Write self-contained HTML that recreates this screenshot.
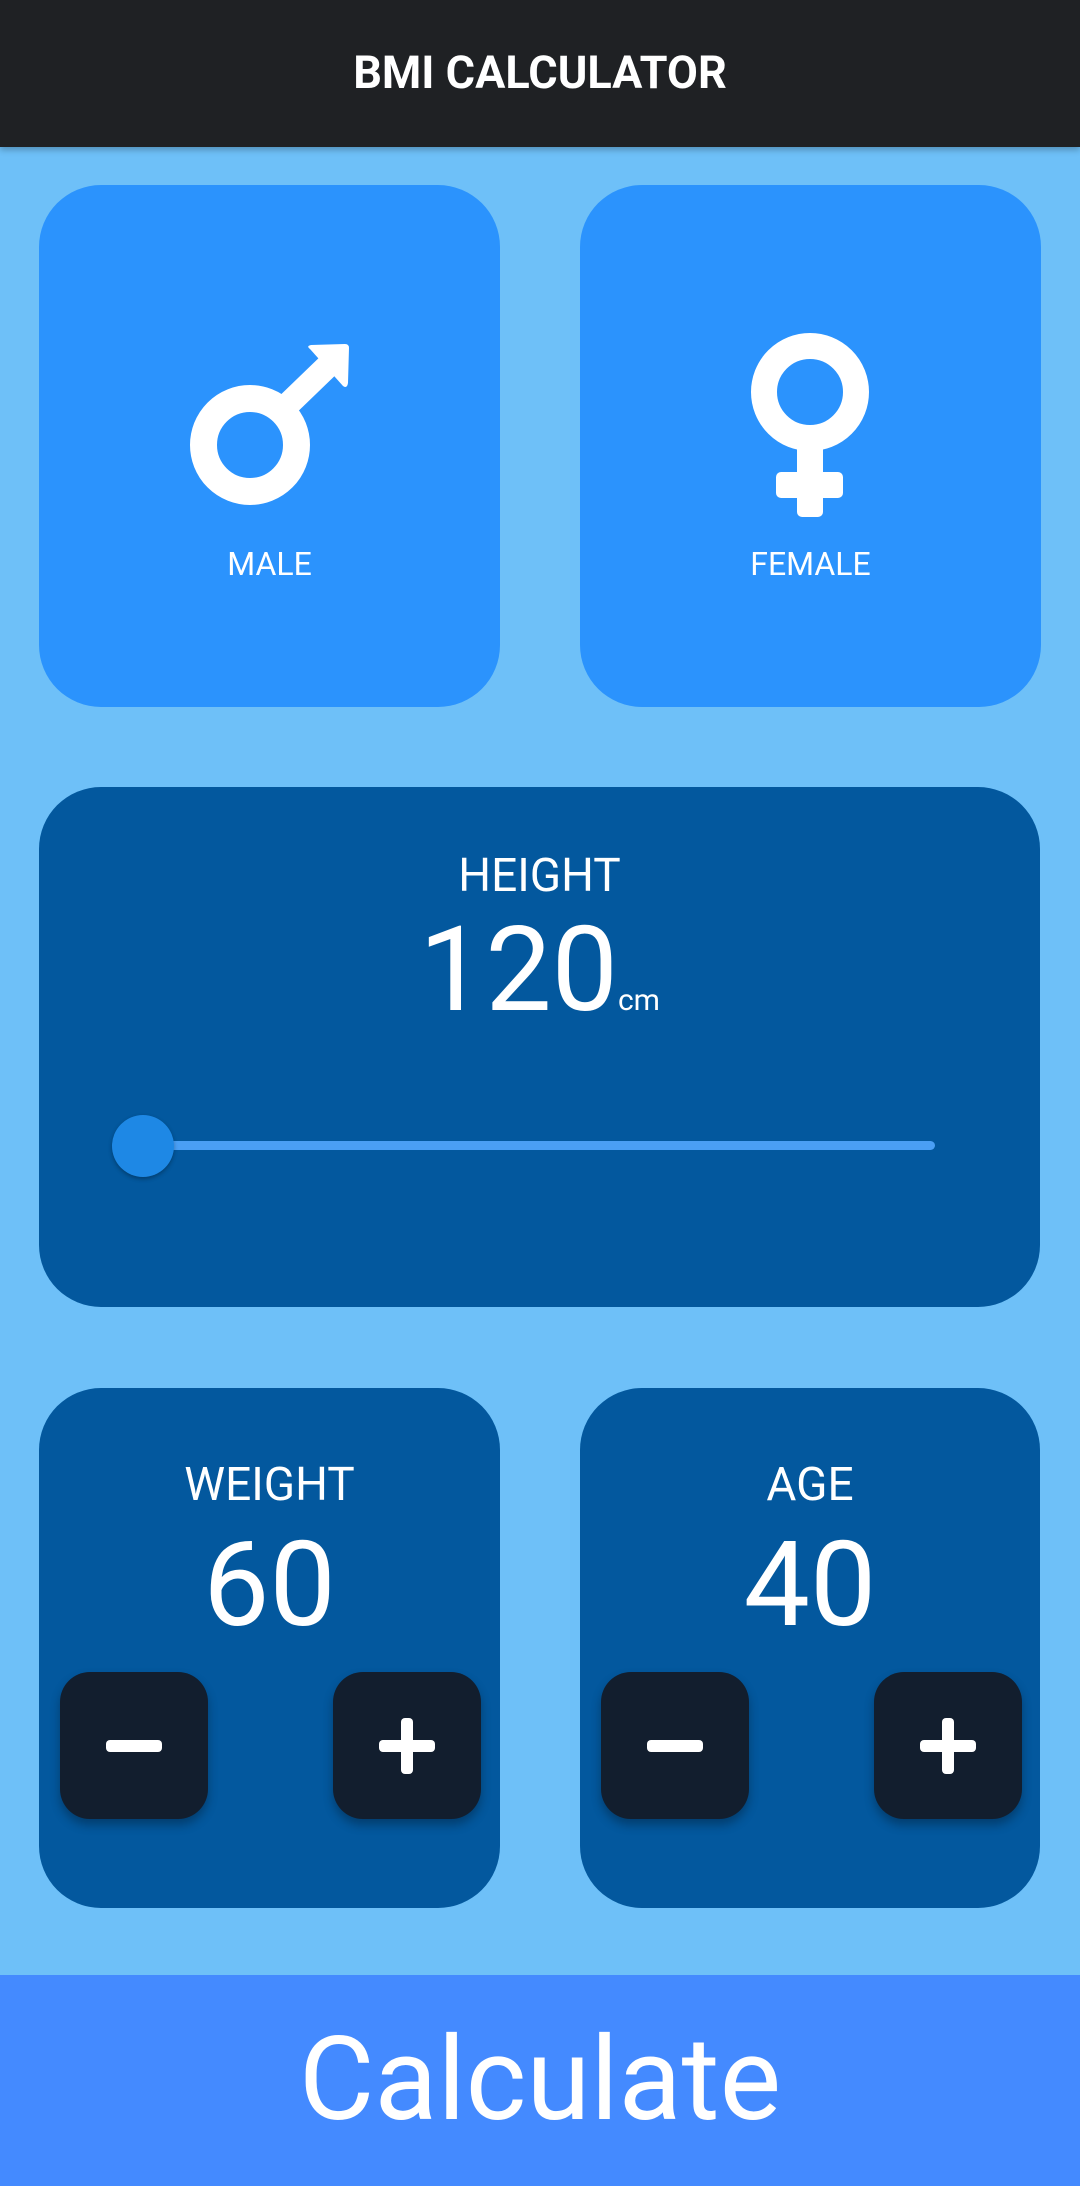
<!DOCTYPE html>
<html><head><meta charset="utf-8"><style>
*{margin:0;padding:0;box-sizing:border-box}
body{width:1080px;height:2186px;background:#6ec0f8;font-family:"Roboto","Liberation Sans",sans-serif;position:relative;overflow:hidden;color:#fff}
.hdr{position:absolute;left:0;top:0;width:1080px;height:147px;background:#1f2124;box-shadow:0 3px 6px rgba(0,0,0,.25)}
.hdr div{position:absolute;top:46px;width:100%;text-align:center;font-size:45px;font-weight:bold;letter-spacing:0}
.card{position:absolute;border-radius:62px}
.g{background:#2b93fd;top:185px;width:461px;height:522px}
.d{background:#03589e}
.lbl{position:absolute;width:100%;text-align:center;font-size:32px}
.dl{font-size:46px}
.big{position:absolute;width:100%;text-align:center;font-size:118px;line-height:1}
.btn{position:absolute;width:148px;height:147px;background:#121e2e;border-radius:30px;box-shadow:0 6px 10px rgba(0,0,0,.3)}
.btn i{position:absolute;background:#fff;border-radius:4px}
.calc{position:absolute;left:0;top:1975px;width:1080px;height:211px;background:#448aff;text-align:center;font-size:116px;line-height:211px}
</style></head><body>
<div class="hdr"><div>BMI CALCULATOR</div></div>

<div class="card g" style="left:39px">
<svg width="461" height="522" style="position:absolute;left:0;top:0" viewBox="39 185 461 522">
<circle cx="250" cy="445" r="46.5" fill="none" stroke="#fff" stroke-width="27"/>
<line x1="278" y1="414" x2="336" y2="358" stroke="#fff" stroke-width="24"/>
<path d="M310,349 Q306,346 311,345 L345,344 Q349,344 349,348 L348,383 Q347,389 343,386 Z" fill="#fff"/>
</svg>
<div class="lbl" style="left:0;top:360px">MALE</div>
</div>
<div class="card g" style="left:580px">
<svg width="461" height="522" style="position:absolute;left:0;top:0" viewBox="580 185 461 522">
<circle cx="810" cy="392" r="46" fill="none" stroke="#fff" stroke-width="26"/>
<rect x="797" y="440" width="26" height="77" rx="5" fill="#fff"/>
<rect x="776" y="472" width="67" height="26" rx="5" fill="#fff"/>
</svg>
<div class="lbl" style="left:0;top:360px">FEMALE</div>
</div>

<div class="card d" style="left:39px;top:787px;width:1001px;height:520px">
<div class="lbl dl" style="top:62px">HEIGHT</div>
<div style="position:absolute;left:0;width:100%;top:124px;text-align:center;line-height:1"><span style="font-size:118px">120</span><span style="font-size:30px">cm</span></div>
<div style="position:absolute;left:104px;top:354px;width:792px;height:9px;background:#4a9ff5;border-radius:5px"></div>
<div style="position:absolute;left:73px;top:328px;width:62px;height:62px;border-radius:50%;background:#1e88e5;box-shadow:0 2px 4px rgba(0,0,0,.3)"></div>
</div>

<div class="card d" style="left:39px;top:1388px;width:461px;height:520px">
<div class="lbl dl" style="top:70px">WEIGHT</div>
<div class="big" style="top:138px">60</div>
<div class="btn" style="left:21px;top:284px"><i style="left:46px;top:68px;width:56px;height:12px"></i></div>
<div class="btn" style="left:294px;top:284px"><i style="left:46px;top:68px;width:56px;height:12px"></i><i style="left:68px;top:46px;width:12px;height:56px"></i></div>
</div>
<div class="card d" style="left:580px;top:1388px;width:460px;height:520px">
<div class="lbl dl" style="top:70px">AGE</div>
<div class="big" style="top:138px">40</div>
<div class="btn" style="left:21px;top:284px"><i style="left:46px;top:68px;width:56px;height:12px"></i></div>
<div class="btn" style="left:294px;top:284px"><i style="left:46px;top:68px;width:56px;height:12px"></i><i style="left:68px;top:46px;width:12px;height:56px"></i></div>
</div>

<div class="calc">Calculate</div>
</body></html>
